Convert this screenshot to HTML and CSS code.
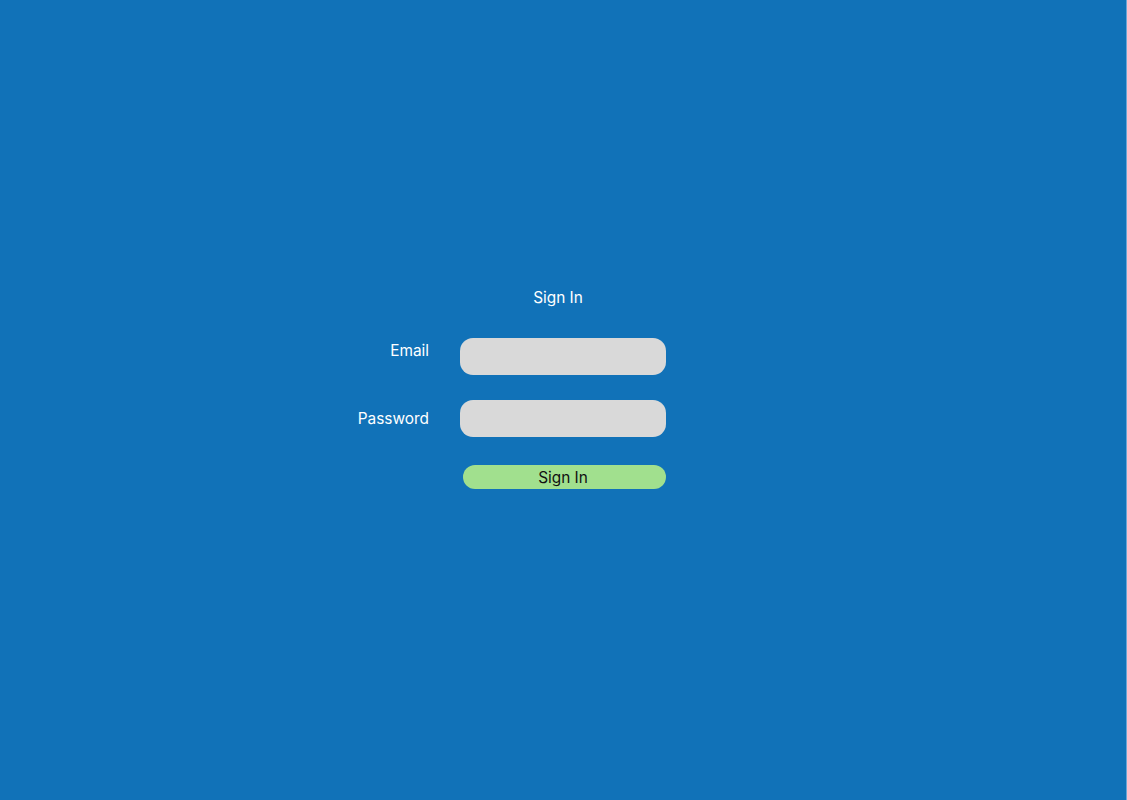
FILE: index.html
```html
<!DOCTYPE html>
<html lang="en">
<head>
<meta charset="utf-8">
<title>Sign In</title>
<link rel="stylesheet" href="styles.css">
</head>
<body>
<div class="page">
  <main class="signin">
    <h1 class="title">Sign In</h1>
    <form class="form">
      <label class="label label-email" for="email">Email</label>
      <input class="field" id="email" type="email">
      <label class="label" for="password">Password</label>
      <input class="field" id="password" type="password">
      <span></span>
      <button class="btn" type="button">Sign In</button>
    </form>
  </main>
</div>
</body>
</html>
```

FILE: styles.css
```css
html, body {
  margin: 0;
  padding: 0;
  height: 100%;
}
body {
  background: #1172b8;
  font-family: Inter, "Noto Sans", sans-serif;
  color: #ffffff;
}
.page {
  height: 800px;
  box-sizing: border-box;
  border-right: 1px solid #6aa6d6;
  padding-top: 288px;
}
.signin {
  margin-left: 340px;
  width: 326px;
}
.title {
  margin: 0 0 31px 0;
  padding-left: 120px;
  width: 196px;
  text-align: center;
  font-size: 15.4px;
  font-weight: 400;
  line-height: 19px;
}
.form {
  display: grid;
  grid-template-columns: 89px 206px;
  column-gap: 31px;
  row-gap: 25px;
  align-items: center;
}
.label {
  text-align: right;
  font-size: 15.4px;
  line-height: 19px;
}
.label-email {
  align-self: start;
  margin-top: 3px;
}
.field {
  box-sizing: border-box;
  width: 206px;
  height: 37px;
  border: none;
  border-radius: 13px;
  background: #d9d9d9;
  outline: none;
  padding: 0 12px;
}
.btn {
  justify-self: end;
  margin-top: 3px;
  width: 203px;
  height: 24px;
  border: none;
  border-radius: 12px;
  background: #a1e08e;
  color: #111111;
  font-family: Inter, "Noto Sans", sans-serif;
  font-size: 15.4px;
  line-height: 19px;
  padding: 0 3px 0 0;
}
```
